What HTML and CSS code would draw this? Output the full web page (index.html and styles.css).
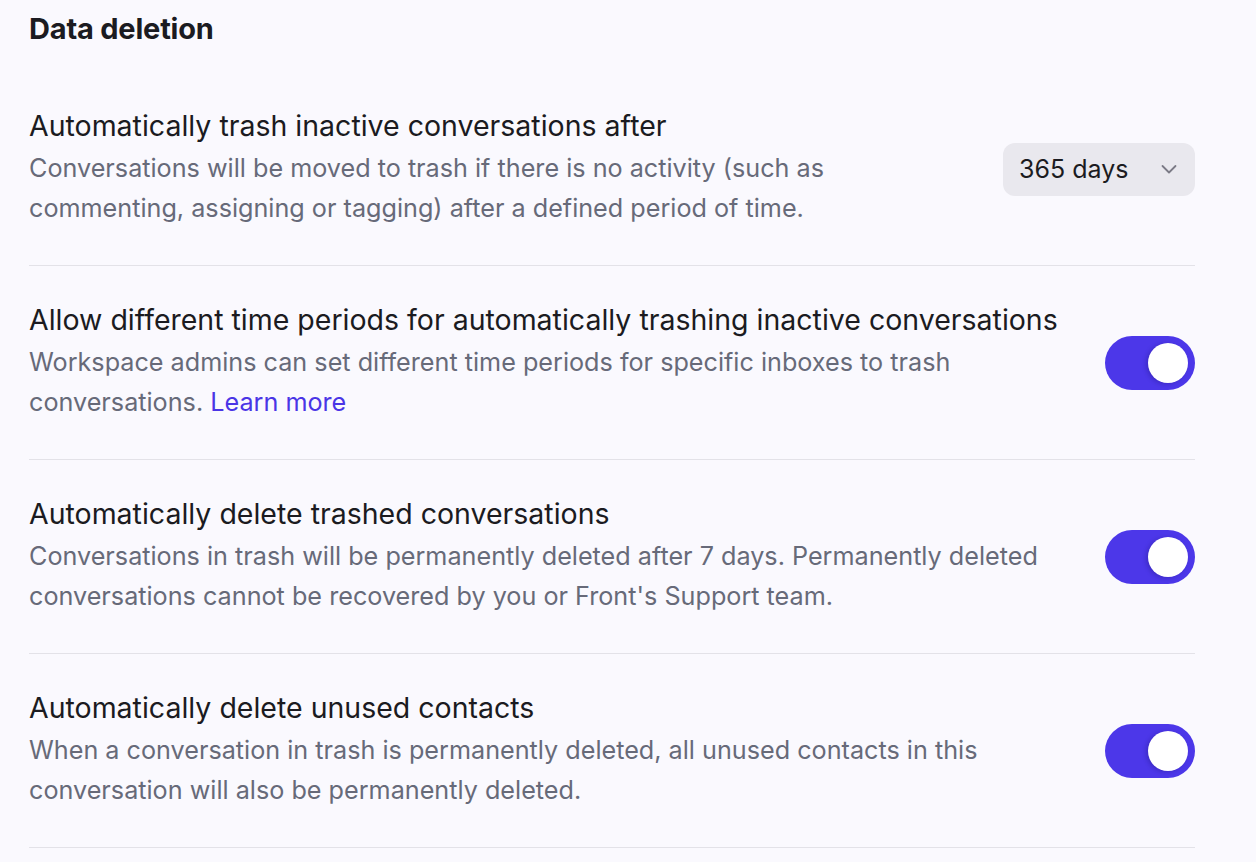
FILE: index.html
```html
<!DOCTYPE html>
<html lang="en">
<head>
    <meta charset="UTF-8">
    <title>Data deletion</title>
    <link rel="stylesheet" href="styles.css">
</head>
<body>
    <div class="settings">
        <h2 class="section-title">Data deletion</h2>

        <div class="setting-row">
            <div class="setting-text">
                <div class="setting-title">Automatically trash inactive conversations after</div>
                <p class="setting-desc">Conversations will be moved to trash if there is no activity (such as commenting, assigning or tagging) after a defined period of time.</p>
            </div>
            <button class="select" type="button">
                <span>365 days</span>
                <svg width="18" height="12" viewBox="0 0 18 12" fill="none">
                    <path d="M2.5 3l6.5 6.5L15.5 3" stroke="#7b7a86" stroke-width="1.8" stroke-linecap="round" stroke-linejoin="round"/>
                </svg>
            </button>
        </div>

        <div class="setting-row">
            <div class="setting-text">
                <div class="setting-title">Allow different time periods for automatically trashing inactive conversations</div>
                <p class="setting-desc">Workspace admins can set different time periods for specific inboxes to trash conversations. <a href="#">Learn more</a></p>
            </div>
            <span class="toggle on"><span class="knob"></span></span>
        </div>

        <div class="setting-row">
            <div class="setting-text">
                <div class="setting-title">Automatically delete trashed conversations</div>
                <p class="setting-desc">Conversations in trash will be permanently deleted after 7 days. Permanently deleted conversations cannot be recovered by you or Front's Support team.</p>
            </div>
            <span class="toggle on"><span class="knob"></span></span>
        </div>

        <div class="setting-row">
            <div class="setting-text">
                <div class="setting-title">Automatically delete unused contacts</div>
                <p class="setting-desc">When a conversation in trash is permanently deleted, all unused contacts in this conversation will also be permanently deleted.</p>
            </div>
            <span class="toggle on"><span class="knob"></span></span>
        </div>
    </div>
</body>
</html>
```

FILE: styles.css
```css
body {
    margin: 0;
    background-color: #faf9fe;
    font-family: 'Inter', 'Noto Sans', sans-serif;
    color: #1b1b21;
}

.settings {
    width: 1166px;
    padding: 13px 0 0 29px;
}

.section-title {
    margin: 0 0 27px;
    font-size: 29px;
    line-height: 32px;
    font-weight: 700;
    letter-spacing: -0.2px;
}

.setting-row {
    display: flex;
    align-items: center;
    justify-content: space-between;
    padding: 38px 0 37px;
    border-bottom: 1px solid #e3e2e8;
}

.setting-text {
    max-width: 1050px;
}

.setting-title {
    font-size: 28.5px;
    line-height: 32px;
    color: #1b1b21;
}

.setting-desc {
    margin: 7px 0 0;
    font-size: 25.2px;
    line-height: 39.5px;
    color: #676a79;
}

.setting-desc a {
    color: #4a35e6;
    text-decoration: none;
}

.setting-row:first-of-type .setting-desc {
    max-width: 830px;
}

.select {
    display: flex;
    align-items: center;
    justify-content: space-between;
    width: 192px;
    height: 53px;
    padding: 0 17px 0 16px;
    border: none;
    border-radius: 12px;
    background-color: #e9e8ee;
    font-family: inherit;
    font-size: 25px;
    color: #1b1b21;
    flex-shrink: 0;
}

.toggle {
    display: flex;
    align-items: center;
    justify-content: flex-end;
    box-sizing: border-box;
    width: 90px;
    height: 54px;
    padding: 0 7px;
    border-radius: 27px;
    background-color: #4c37e9;
    flex-shrink: 0;
}

.knob {
    width: 40px;
    height: 40px;
    border-radius: 50%;
    background-color: #fff;
    box-shadow: -2px 1px 4px rgba(20, 10, 90, 0.25);
}
```
